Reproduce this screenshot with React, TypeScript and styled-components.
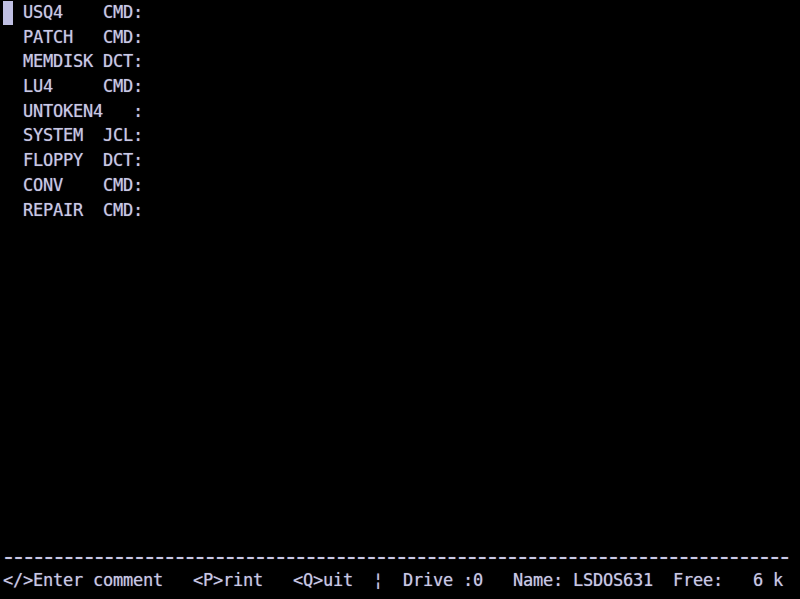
import React from "react";
import styled, { createGlobalStyle } from "styled-components";

const GlobalStyle = createGlobalStyle`
  html, body {
    margin: 0;
    padding: 0;
    background: #000;
    overflow: hidden;
  }
`;

const Screen = styled.div`
  width: 800px;
  height: 599px;
  box-sizing: border-box;
  padding: 0 0 0 3px;
  background: #000;
  color: #c9c9e6;
  font-family: "DejaVu Sans Mono", "Liberation Mono", monospace;
  font-size: 17px;
  letter-spacing: -0.235px;
  display: grid;
  grid-template-rows: repeat(24, 24.7px);
  text-shadow: 0 0 1px rgba(200, 200, 235, 0.55);
`;

const Line = styled.div`
  line-height: 24.7px;
  height: 24.7px;
  white-space: pre;
`;

const Cursor = styled.span`
  display: inline-block;
  width: 10px;
  height: 23.5px;
  margin-top: 1px;
  vertical-align: top;
  background: #bfbfe2;
`;

const Divider = styled(Line)`
  grid-row: 23;
  font-size: 25px;
  letter-spacing: -4.97px;
  margin-left: -2px;
  padding-top: 1.5px;
`;

const Status = styled(Line)`
  grid-row: 24;
`;

const files: [string, string][] = [
  ["USQ4", "CMD"],
  ["PATCH", "CMD"],
  ["MEMDISK", "DCT"],
  ["LU4", "CMD"],
  ["UNTOKEN4", ""],
  ["SYSTEM", "JCL"],
  ["FLOPPY", "DCT"],
  ["CONV", "CMD"],
  ["REPAIR", "CMD"],
];

const fmt = (name: string, ext: string) =>
  " " + name.padEnd(8, " ") + (ext ? ext : "   ") + ":";

export default function App() {
  return (
    <>
      <GlobalStyle />
      <Screen>
        {files.map(([name, ext], i) => (
          <Line key={name}>
            {i === 0 ? <Cursor /> : " "}
            {fmt(name, ext)}
          </Line>
        ))}
        <Divider>{"-".repeat(78)}</Divider>
        <Status>
          {"</>Enter comment   <P>rint   <Q>uit  ¦  Drive :0   Name: LSDOS631  Free:   6 k"}
        </Status>
      </Screen>
    </>
  );
}
